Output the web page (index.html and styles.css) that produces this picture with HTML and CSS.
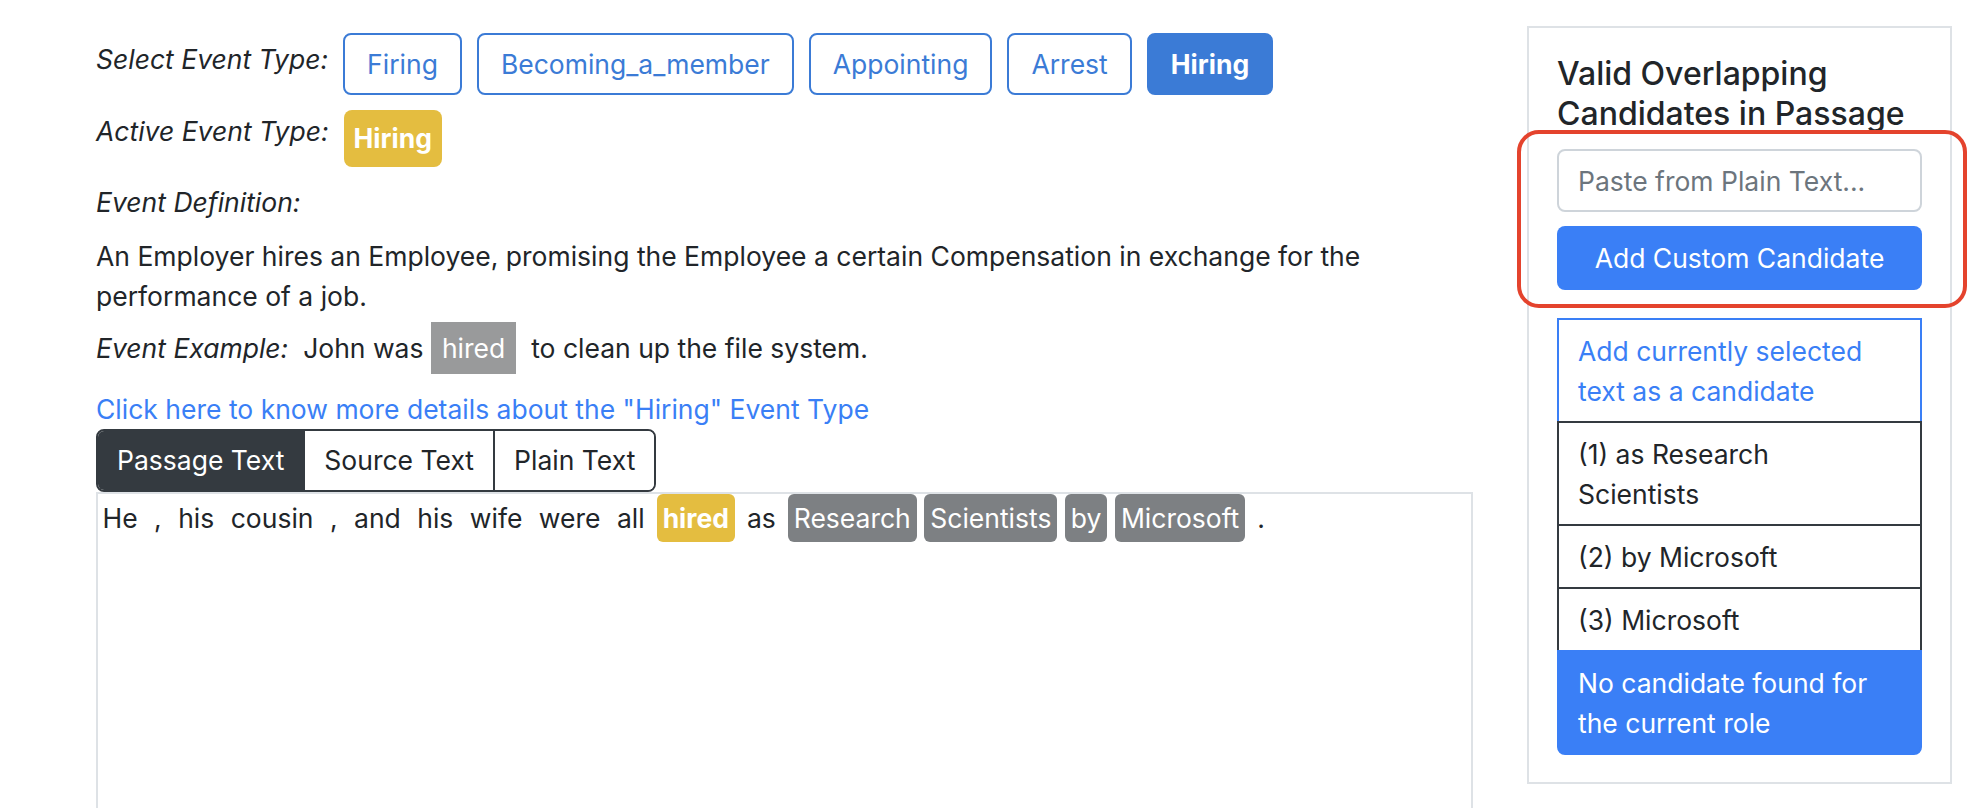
FILE: index.html
```html
<!DOCTYPE html>
<html lang="en">
<head>
<meta charset="utf-8">
<title>Event Annotation</title>
<link rel="stylesheet" href="styles.css">
</head>
<body>
<div class="page">
  <main class="main">
    <div class="row row-select">
      <span class="label label-select">Select Event Type:</span>
      <div class="btns">
        <button class="btn-outline">Firing</button>
        <button class="btn-outline">Becoming_a_member</button>
        <button class="btn-outline">Appointing</button>
        <button class="btn-outline">Arrest</button>
        <button class="btn-solid">Hiring</button>
      </div>
    </div>
    <div class="row row-active">
      <span class="label label-active">Active Event Type:</span>
      <span class="badge">Hiring</span>
    </div>
    <div class="label block-label">Event Definition:</div>
    <p class="def">An Employer hires an Employee, promising the Employee a certain Compensation in exchange for the performance of a job.</p>
    <div class="example"><span class="label">Event Example:</span>&nbsp; John was <span class="ex-hired">hired</span>&nbsp; to clean up the file system.</div>
    <a class="more" href="#">Click here to know more details about the "Hiring" Event Type</a>
    <div class="tabs">
      <button class="tab tab-active">Passage Text</button>
      <button class="tab">Source Text</button>
      <button class="tab">Plain Text</button>
    </div>
    <div class="passage"><span class="tok">He</span> <span class="tok">,</span> <span class="tok">his</span> <span class="tok">cousin</span> <span class="tok">,</span> <span class="tok">and</span> <span class="tok">his</span> <span class="tok">wife</span> <span class="tok">were</span> <span class="tok">all</span> <span class="tok trig">hired</span> <span class="tok">as</span> <span class="tok cand">Research</span> <span class="tok cand">Scientists</span> <span class="tok cand">by</span> <span class="tok cand">Microsoft</span> <span class="tok">.</span></div>
  </main>
  <aside class="panel">
    <h4 class="panel-title">Valid Overlapping Candidates in Passage</h4>
    <input class="paste" type="text" placeholder="Paste from Plain Text...">
    <button class="add-btn">Add Custom Candidate</button>
    <ul class="cands">
      <li class="cand-item cand-add">Add currently selected text as a candidate</li>
      <li class="cand-item cand-dark">(1) as Research Scientists</li>
      <li class="cand-item cand-dark">(2) by Microsoft</li>
      <li class="cand-item cand-dark">(3) Microsoft</li>
      <li class="cand-item cand-none">No candidate found for the current role</li>
    </ul>
    <div class="annot"></div>
  </aside>
</div>
</body>
</html>
```

FILE: styles.css
```css
* { box-sizing: border-box; }
html, body { margin: 0; padding: 0; background: #fff; }
body {
  font-family: Inter, "Noto Sans", "Liberation Sans", sans-serif;
  font-size: 26.5px;
  line-height: 40px;
  color: #212529;
}
.page {
  display: flex;
  align-items: flex-start;
  gap: 54px;
  padding: 26px 34px 0 96px;
}
.main {
  width: 1377px;
  flex: none;
  display: flex;
  flex-direction: column;
  align-items: flex-start;
  margin-top: 7px;
}
.row { display: flex; align-items: flex-start; gap: 15px; }
.label { font-style: italic; }
.label-select { margin-top: 6px; }
.label-active { margin-top: 1px; }
.btns { display: flex; gap: 15px; }
button { font-family: inherit; font-size: 26.5px; cursor: pointer; }
.btn-outline, .btn-solid {
  height: 62px;
  padding: 0 22px;
  border: 2px solid #3b7bd6;
  border-radius: 8px;
  background: #fff;
  color: #3b7bd6;
  line-height: 58px;
}
.btn-solid { background: #3b7bd6; color: #fff; font-weight: 700; }
.row-active { margin-top: 15px; }
.badge {
  display: inline-block;
  height: 57px;
  line-height: 57px;
  padding: 0 10px;
  border-radius: 8px;
  background: #e4bd40;
  color: #fff;
  font-weight: 700;
}
.block-label { margin-top: 15px; }
.def { margin: 14px 0 0; }
.example { margin-top: 6px; }
.ex-hired {
  display: inline-block;
  padding: 6px 11px;
  background: #999a9b;
  color: #fff;
}
.more {
  margin-top: 15px;
  color: #3a7ff6;
  text-decoration: none;
}
.tabs {
  display: flex;
  border: 2px solid #343a40;
  border-radius: 8px;
  overflow: hidden;
  height: 63px;
}
.tab {
  height: 59px;
  padding: 0 19px;
  border: 0;
  border-left: 2px solid #343a40;
  background: #fff;
  color: #212529;
  line-height: 59px;
}
.tab:first-child { border-left: 0; }
.tab-active { background: #343a40; color: #fff; }
.passage {
  align-self: stretch;
  min-height: 360px;
  border: 2px solid #dee2e6;
  border-bottom: 0;
  padding: 0;
}
.tok {
  display: inline-block;
  padding: 4px 4.5px;
}
.trig { background: #e4bd40; color: #fff; font-weight: 700; border-radius: 6px; padding: 4px 6px; }
.cand { background: #7d8083; color: #fff; border-radius: 6px; padding: 4px 6px; }
.panel {
  position: relative;
  width: 425px;
  flex: none;
  border: 2px solid #dee2e6;
  padding: 26px 28px 27px;
}
.panel-title {
  margin: 0;
  font-size: 32px;
  line-height: 40px;
  font-weight: 500;
  color: #212529;
}
.paste {
  display: block;
  width: 100%;
  height: 63px;
  margin-top: 15px;
  padding: 0 19px;
  border: 2px solid #ced4da;
  border-radius: 8px;
  font-family: inherit;
  font-size: 26.5px;
  color: #212529;
}
.paste::placeholder { color: #6c757d; }
.add-btn {
  display: block;
  width: 100%;
  height: 64px;
  margin-top: 14px;
  border: 0;
  border-radius: 8px;
  background: #3a7ff6;
  color: #fff;
}
.cands { list-style: none; margin: 28px 0 0; padding: 0; }
.cand-item {
  padding: 10.5px 36px 10.5px 19px;
  border: 2px solid #343a40;
  border-bottom: 0;
}
.cand-add { border-color: #3a7ff6; color: #3a7ff6; }
.cand-none {
  background: #3a7ff6;
  border: 2px solid #3a7ff6;
  color: #fff;
  border-radius: 0 0 8px 8px;
}
.annot {
  position: absolute;
  left: -12px;
  top: 102px;
  width: 450px;
  height: 178px;
  border: 4px solid #e4432d;
  border-radius: 22px;
  pointer-events: none;
}
```
